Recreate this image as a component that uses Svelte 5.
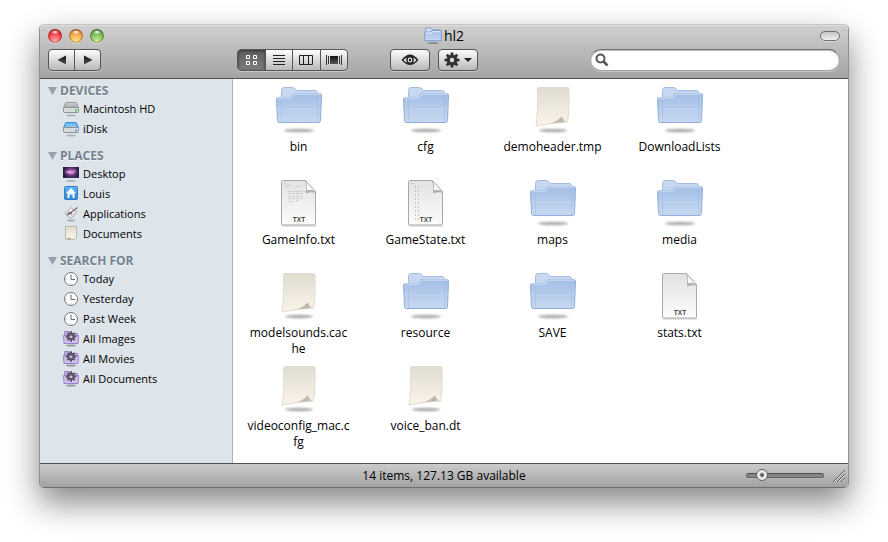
<script>
    let view = $state('icons'); // Which of the four view buttons is pressed
    let iconSize = $state(14);
    let query = $state('');

    const views = [
        { id: 'icons', label: 'Icon view' },
        { id: 'list', label: 'List view' },
        { id: 'columns', label: 'Column view' },
        { id: 'flow', label: 'Cover Flow view' }
    ];

    const sections = [
        {
            title: 'DEVICES',
            items: [
                { name: 'Macintosh HD', icon: 'disk' },
                { name: 'iDisk', icon: 'idisk' }
            ]
        },
        {
            title: 'PLACES',
            items: [
                { name: 'Desktop', icon: 'desktop' },
                { name: 'Louis', icon: 'home' },
                { name: 'Applications', icon: 'apps' },
                { name: 'Documents', icon: 'docs' }
            ]
        },
        {
            title: 'SEARCH FOR',
            items: [
                { name: 'Today', icon: 'clock' },
                { name: 'Yesterday', icon: 'clock' },
                { name: 'Past Week', icon: 'clock' },
                { name: 'All Images', icon: 'smart' },
                { name: 'All Movies', icon: 'smart' },
                { name: 'All Documents', icon: 'smart' }
            ]
        }
    ];

    const files = [
        { name: 'bin', kind: 'folder' },
        { name: 'cfg', kind: 'folder' },
        { name: 'demoheader.tmp', kind: 'page' },
        { name: 'DownloadLists', kind: 'folder' },
        { name: 'GameInfo.txt', kind: 'text', preview: 'info' },
        { name: 'GameState.txt', kind: 'text', preview: 'state' },
        { name: 'maps', kind: 'folder' },
        { name: 'media', kind: 'folder' },
        { name: 'modelsounds.cache', kind: 'page' },
        { name: 'resource', kind: 'folder' },
        { name: 'SAVE', kind: 'folder' },
        { name: 'stats.txt', kind: 'text' },
        { name: 'videoconfig_mac.cfg', kind: 'page' },
        { name: 'voice_ban.dt', kind: 'page' }
    ];

    const teeth = [0, 45, 90, 135, 180, 225, 270, 315];
</script>

{#snippet gear(color)}
    <g fill={color}>
        {#each teeth as angle}
            <path d="M-1.7 -4 L-1.3 -7.5 H1.3 L1.7 -4Z" transform="rotate({angle})" />
        {/each}
    </g>
    <circle r="3.7" fill="none" stroke={color} stroke-width="3" />
{/snippet}

{#snippet folder()}
    <ellipse cx="25" cy="45.5" rx="15" ry="1.8" fill="#777" opacity=".6" filter="url(#soft)" />
    <path d="M7.5 34V5.5Q7.5 2.5 10 2.5H18.5Q20 2.5 21 4L22.5 5.5H41Q43.5 5.5 43.5 8V34Z" fill="url(#folder-back)" stroke="#a3bce3" />
    <path d="M2.5 14.5Q2.5 12.5 4.5 12.5H15.5Q17.5 12.5 18.5 11L19.5 9.5Q20.5 8.5 22 8.5H46Q47.5 8.5 47.5 10.5L46.5 35.5Q46.5 37.5 44.5 37.5H5.5Q3.5 37.5 3.5 35.5Z" fill="url(#folder-front)" stroke="#8eaedd" />
    <path d="M3.5 13H16Q18 13 19.5 11Q20.500 9 22.500 9H46.500" fill="none" stroke="#e4ecf9" opacity=".9" />
    <path d="M3 24H47" stroke="#c7d8f2" opacity=".7" />
    <path d="M7.5 15V37M43.5 10V37" stroke="#8facd9" opacity=".3" />
{/snippet}

{#snippet sheet()}
    <ellipse cx="25" cy="45.5" rx="14" ry="1.8" fill="#777" opacity=".6" filter="url(#soft)" />
    <path d="M9.5 4Q9.5 2.5 11 2.5H39.5Q41 2.5 41 4Q41.5 28 39.5 37Q27 37.5 8 41Q10 30 9.5 4Z" fill="url(#sheet)" stroke="#e2ddd0" />
    <path d="M8.5 41Q27 39 34 31.5Q35.5 35.5 39.5 37Q26 37.5 8.5 41Z" fill="url(#curl)" />
{/snippet}

{#snippet smallIcon(icon)}
    <svg class="small-icon" viewBox="0 0 18 18" aria-hidden="true">
        {#if icon === 'disk' || icon === 'idisk'}
            <ellipse cx="9" cy="15.5" rx="5" ry="1" fill="#8d98a3" opacity=".6" />
            <path d="M3.5 3Q4 2.5 5 2.5H13Q14 2.5 14.5 3L16.5 8H1.5Z" fill={icon === 'disk' ? 'url(#metal)' : '#69b3ef'} stroke={icon === 'disk' ? '#999' : '#3d90d8'} />
            {#if icon === 'idisk'}
                <path d="M5 5H13M4 7H14" stroke="#b9e0ff" stroke-dasharray="2 1" />
            {/if}
            <rect x="1.5" y="7.500" width="15" height="5" rx="1" fill="#d8dadc" stroke="#8f9397" />
            <path d="M13 10.5H15" stroke={icon === 'disk' ? '#35cf4a' : '#51a5e8'} stroke-width="2" />
        {:else if icon === 'desktop'}
            <ellipse cx="9" cy="16" rx="5" ry="1" fill="#8d98a3" opacity=".6" />
            <rect x="1" y="1" width="16" height="12" fill="url(#aurora)" />
            <path d="M1 1.5H17" stroke="#e5e5ec" />
            <path d="M3 7L8 5L10 7L14 4L12 8L8 9Z" fill="#f0a8df" opacity=".7" />
            <path d="M1 12.5H17" stroke="#35305d" />
        {:else if icon === 'home'}
            <rect x="2.5" y="1.5" width="13" height="13" rx="1" fill="url(#blue)" stroke="#2e7fca" />
            <path d="M9 3L14 8H12.5V13H10.5V9.5H7.5V13H5.5V8H4Z" fill="#f2f9ff" />
        {:else if icon === 'apps'}
            <ellipse cx="9" cy="15.5" rx="4" ry="1" fill="#8d98a3" opacity=".7" />
            <path d="M3 8.5L9 2.5L15 7.5L8.5 13.5Z" fill="#f0f0f0" stroke="#a5a7aa" />
            <path d="M5.5 8.5L8 6M7 10L10 7M9 11L12 8" stroke="#c1c1c4" />
            <path d="M5 10L9 7.5L15.5 2.5" fill="none" stroke="#777" stroke-width="1.5" />
            <path d="M6 8L10 8.5" stroke="#8b5a6c" stroke-width="1.5" />
        {:else if icon === 'docs'}
            <path d="M3.5 1.5H14.5V12.5L12 14.5L3.5 14Z" fill="url(#sheet)" stroke="#bdb7a8" />
            <path d="M4 14L8 12.5L9 15Z" fill="#a9a69e" />
        {:else if icon === 'clock'}
            <circle cx="9" cy="9" r="6.5" fill="#fff" stroke="#777" />
            <path d="M9 4.5V9.5H13" fill="none" stroke="#666" />
            <path d="M9 13.5V15M3 9H4.5" stroke="#bbb" />
        {:else}
            <ellipse cx="9" cy="15.5" rx="5" ry="1" fill="#777" opacity=".7" />
            <path d="M2.5 7V1.5H7L8 3.5H15.5V7" fill="#c8b8e8" stroke="#9a80cf" />
            <path d="M1.5 5.5H16.5L16 13.5H2Z" fill="#cfc1ec" stroke="#9a80cf" />
            <g transform="translate(9 6.5) scale(.7)">{@render gear('#5d5568')}</g>
        {/if}
    </svg>
{/snippet}

<svg class="defs" width="0" height="0" aria-hidden="true">
    <defs>
        <filter id="soft" x="-20%" y="-150%" width="140%" height="400%"><feGaussianBlur stdDeviation="0.9" /></filter>
        <linearGradient id="folder-back" x2="0" y2="1"><stop stop-color="#cbdaf1" /><stop offset="1" stop-color="#b3c9eb" /></linearGradient>
        <linearGradient id="folder-front" x2="0" y2="1"><stop stop-color="#a3bee7" /><stop offset="1" stop-color="#c8d8f0" /></linearGradient>
        <linearGradient id="sheet" x2="0" y2="1"><stop stop-color="#e0dccf" /><stop offset="1" stop-color="#faf5e8" /></linearGradient>
        <linearGradient id="curl"><stop stop-color="#f1ece0" /><stop offset=".8" stop-color="#bab5a8" /><stop offset="1" stop-color="#e9e4d8" /></linearGradient>
        <linearGradient id="paper" x2="0" y2="1"><stop stop-color="#e2e2e2" /><stop offset="1" stop-color="#fcfcfc" /></linearGradient>
        <linearGradient id="fold" x1="0" y1="1" x2="1" y2="0"><stop offset=".3" stop-color="#fff" /><stop offset="1" stop-color="#bbb" /></linearGradient>
        <linearGradient id="metal" x2="0" y2="1"><stop stop-color="#d5d5d5" /><stop offset="1" stop-color="#a4a4a4" /></linearGradient>
        <linearGradient id="blue" x2="0" y2="1"><stop stop-color="#67b5f2" /><stop offset="1" stop-color="#2f86d6" /></linearGradient>
        <linearGradient id="glyph" x2="0" y2="1"><stop stop-color="#111" /><stop offset="1" stop-color="#555" /></linearGradient>
        <radialGradient id="aurora"><stop stop-color="#d987c8" /><stop offset=".6" stop-color="#693a80" /><stop offset="1" stop-color="#241c3c" /></radialGradient>
    </defs>
</svg>

<div class="desk">
    <div class="window">
        <header>
            <div class="titlebar">
                <div class="lights">
                    <button class="light red" aria-label="Close"></button>
                    <button class="light amber" aria-label="Minimize"></button>
                    <button class="light green" aria-label="Zoom"></button>
                </div>
                <h1>
                    <svg width="18" height="18" viewBox="0 0 50 50" aria-hidden="true">
                        <ellipse cx="25" cy="45" rx="15" ry="2.5" fill="#777" opacity=".8" />
                        <path d="M5 30V3H20L24 8H44V30Z" fill="#d5e2f5" stroke="#7fa0d6" stroke-width="2.5" />
                        <path d="M2 14H17L21 10H48V38H2Z" fill="url(#folder-front)" stroke="#7498d2" stroke-width="2.5" />
                        <path d="M4 17H19L23 13H46" fill="none" stroke="#e6effc" stroke-width="3" />
                    </svg>
                    hl2
                </h1>
                <button class="pill" aria-label="Toggle toolbar"></button>
            </div>

            <div class="toolbar">
                <div class="group nav">
                    <button aria-label="Back"><svg width="10" height="10" viewBox="0 0 10 10"><path d="M9 0.5V9.5L0.5 5Z" fill="url(#glyph)" /></svg></button>
                    <button aria-label="Forward"><svg width="10" height="10" viewBox="0 0 10 10"><path d="M1 0.5V9.5L9.5 5Z" fill="url(#glyph)" /></svg></button>
                </div>

                <div class="group views">
                    {#each views as v}
                        <button class:pressed={view === v.id} aria-label={v.label} aria-pressed={view === v.id} onclick={() => (view = v.id)}>
                            <svg width="16" height="12" viewBox="0 0 16 12">
                                {#if v.id === 'icons'}
                                    <path d="M3.500 1.500H6.500V4.500H3.500ZM10.500 1.500H13.500V4.500H10.500ZM3.500 7.500H6.500V10.500H3.500ZM10.500 7.500H13.500V10.500H10.500Z" fill="none" stroke={view === 'icons' ? '#fff' : '#222'} />
                                {:else if v.id === 'list'}
                                    <path d="M2 1.5H14M2 4.5H14M2 7.5H14M2 10.5H14" stroke="#222" />
                                {:else if v.id === 'columns'}
                                    <path d="M1.5 1.5H14.5V10.5H1.5ZM5.5 1V11M10.5 1V11" fill="none" stroke="#222" />
                                {:else}
                                    <rect x="4" y="2" width="8" height="8" fill="url(#glyph)" />
                                    <path d="M0.5 1V11M2.5 2V10M13.5 2V10M15.5 1V11" stroke="#333" />
                                {/if}
                            </svg>
                        </button>
                    {/each}
                </div>

                <div class="actions">
                    <button class="single" aria-label="Quick Look">
                        <svg width="18" height="12" viewBox="0 0 18 12">
                            <path d="M0.5 6Q9 -5 17.5 6Q9 16 0.5 6Z" fill="#262626" />
                            <path d="M2.500 6Q4 4 5.500 3.500Q4.500 6 6 8.500Q4 8 2.500 6ZM15.500 6Q14 4 12.500 3.500Q13.500 6 12 8.500Q14 8 15.500 6Z" fill="#ddd" />
                            <circle cx="9" cy="6" r="1.800" fill="#222" stroke="#e4e4e4" stroke-width="1.200" />
                        </svg>
                    </button>
                    <button class="single" aria-label="Action">
                        <svg width="28" height="16" viewBox="0 0 28 16">
                            <g transform="translate(8 8)">{@render gear('#333')}</g>
                            <path d="M20 6H28L24 10Z" fill="#222" />
                        </svg>
                    </button>
                </div>

                <label class="search">
                    <svg width="14" height="14" viewBox="0 0 14 14" aria-hidden="true">
                        <circle cx="5.5" cy="5.5" r="4" fill="none" stroke="#555" stroke-width="2" />
                        <path d="M8.5 8.5L12.5 12.5" stroke="#555" stroke-width="2.5" />
                    </svg>
                    <input type="search" aria-label="Search" bind:value={query} />
                </label>
            </div>
        </header>

        <div class="body">
            <nav class="sidebar">
                {#each sections as section}
                    <section>
                        <h2>
                            <svg width="9" height="8" viewBox="0 0 9 8" aria-hidden="true"><path d="M0 0H9L4.5 8Z" fill="#98a3ae" /></svg>
                            {section.title}
                        </h2>
                        <ul>
                            {#each section.items as item}
                                <li>
                                    <a href="#{item.icon}">
                                        {@render smallIcon(item.icon)}
                                        {item.name}
                                    </a>
                                </li>
                            {/each}
                        </ul>
                    </section>
                {/each}
            </nav>

            <main>
                {#each files as file}
                    <button class="file">
                        <svg width="49" height="50" viewBox="0 0 49 50" aria-hidden="true">
                            {#if file.kind === 'folder'}
                                {@render folder()}
                            {:else if file.kind === 'page'}
                                {@render sheet()}
                            {:else}
                                <path d="M7.5 48H42" stroke="#999" opacity=".5" />
                                <path d="M7.5 3.5Q7.5 2.5 8.5 2.5H31.5L41.5 13.5V46Q41.5 47 40.5 47H8.5Q7.5 47 7.5 46Z" fill="url(#paper)" stroke="#a9a9a9" />
                                <path d="M31.5 3Q33 9 32 15.5Q37 13.5 41.5 14.5Z" fill="#777" opacity=".5" />
                                <path d="M31.5 2.5Q33 7 32.5 12.5Q37 11.5 41.5 13.5Z" fill="url(#fold)" stroke="#aaa" stroke-width=".7" />
                                {#if file.preview === 'info'}
                                    <path d="M10 5.500H13M11 7.500H17M12 9.500H16M22 8.500H26" stroke="#ccc" stroke-dasharray="2 1" />
                                    <path d="M14 13.500H32M14 15.500H30M14 18.500H30M14 20.500H28M15 23.500H18M22 22.500H24" stroke="#ccc" stroke-dasharray="3 1" />
                                {:else if file.preview === 'state'}
                                    <path d="M10 5.500H13" stroke="#ccc" />
                                    <path d="M14.500 8V42M17.500 8V42" stroke="#c4c4c4" stroke-dasharray="2 2" />
                                {/if}
                                <text x="25" y="44" text-anchor="middle" class="badge">TXT</text>
                            {/if}
                        </svg>
                        <span>{file.name}</span>
                    </button>
                {/each}
            </main>
        </div>

        <footer>
            <p>14 items, 127.13 GB available</p>
            <div class="size">
                <input type="range" min="0" max="100" aria-label="Icon size" bind:value={iconSize} />
                <svg width="12" height="12" viewBox="0 0 12 12" aria-hidden="true">
                    <path d="M1 12L12 1M5 12L12 5M9 12L12 9" stroke="#ddd" />
                    <path d="M0 12L12 0M4 12L12 4M8 12L12 8" stroke="#555" />
                </svg>
            </div>
        </footer>
    </div>
</div>

<style>
    :global(body) {
        background: #fff;
    }

    .defs {
        position: absolute;
    }

    .desk {
        box-sizing: border-box;
        display: flex;
        flex-direction: column;
        min-height: 100vh;
        padding: 24px 39px 54px;
    }

    .window {
        display: flex;
        flex: 1;
        flex-direction: column;
        border: 1px solid #8f8f8f;
        border-top-color: #c4c4c4;
        border-bottom-color: #6f6f6f;
        border-radius: 5px;
        background: #fff;
        box-shadow: 0 15px 32px rgba(0, 0, 0, 0.48);
        font-family: 'Lucida Grande', 'Open Sans', 'Noto Sans', sans-serif;
        font-size: 12px;
        color: #000;
        overflow: hidden;
    }

    button {
        padding: 0;
        border: 0;
        background: none;
        font: inherit;
        color: inherit;
    }

    svg {
        display: block;
        flex: none;
    }

    header {
        background: linear-gradient(#d0d0d0, #a4a4a4);
        border-bottom: 1px solid #515151;
        box-shadow: inset 0 1px #e0e0e0;
    }

    .titlebar {
        display: grid;
        grid-template-columns: 1fr auto 1fr;
        align-items: center;
        height: 22px;
        padding: 0 8px;
    }

    .lights {
        display: flex;
        gap: 7px;
    }

    .light {
        width: 14px;
        height: 14px;
        border-radius: 50%;
        box-shadow: inset 0 0 1px 1px rgba(60, 0, 0, 0.35), 0 1px rgba(255, 255, 255, 0.5);
    }

    .red {
        background: radial-gradient(ellipse 4px 2px at 50% 22%, #fff, transparent), radial-gradient(circle at 50% 90%, #ffb5b5, #ee3a40 60%, #a81c20);
    }

    .amber {
        background: radial-gradient(ellipse 4px 2px at 50% 22%, #fff, transparent), radial-gradient(circle at 50% 90%, #ffe98c, #f0a044 60%, #a85a1c);
    }

    .green {
        background: radial-gradient(ellipse 4px 2px at 50% 22%, #fff, transparent), radial-gradient(circle at 50% 90%, #d3f3a0, #74b855 60%, #38702c);
    }

    h1 {
        display: flex;
        align-items: center;
        gap: 2px;
        margin: 0;
        font-size: 14px;
        font-weight: 400;
        line-height: 22px;
    }

    .pill {
        justify-self: end;
        width: 20px;
        height: 10px;
        border: 1px solid #707070;
        border-radius: 5px;
        background: linear-gradient(#c4c4c4, #efefef);
        box-shadow: 0 1px #ddd;
    }

    .toolbar {
        display: flex;
        align-items: center;
        padding: 2px 8px 7px;
    }

    .group,
    .single {
        box-sizing: border-box;
        height: 22px;
        border: 1px solid #565656;
        border-radius: 4px;
        background: linear-gradient(#fdfdfd, #b9b9b9);
        box-shadow: 0 1px rgba(255, 255, 255, 0.35);
    }

    .group {
        display: flex;
        overflow: hidden;
    }

    .group button,
    .single {
        display: flex;
        align-items: center;
        justify-content: center;
    }

    .group button {
        flex: 1;
    }

    .group button + button {
        border-left: 1px solid #565656;
    }

    .group .pressed {
        background: linear-gradient(#5c5c5c, #7e7e7e);
        box-shadow: inset 0 1px 3px #333;
    }

    .nav {
        width: 53px;
    }

    .views {
        width: 111px;
        margin-left: 136px;
    }

    .actions {
        display: flex;
        gap: 8px;
        margin-left: 42px;
    }

    .single {
        width: 40px;
    }

    .search {
        display: flex;
        align-items: center;
        gap: 4px;
        box-sizing: border-box;
        width: 250px;
        height: 22px;
        margin-left: auto;
        padding: 0 8px 0 4px;
        border: 1px solid #a2a2a2;
        border-top-color: #707070;
        border-radius: 11px;
        background: #fff;
        box-shadow: inset 0 1px 1px #bbb, 0 1px #c5c5c5;
    }

    .search input {
        flex: 1;
        min-width: 0;
        border: 0;
        outline: 0;
        background: none;
        font: inherit;
    }

    .body {
        display: flex;
        flex: 1;
    }

    .sidebar {
        box-sizing: border-box;
        width: 193px;
        padding-top: 4px;
        border-right: 1px solid #b2b2b2;
        background: #dde4ea;
        font-size: 11px;
    }

    section {
        margin-bottom: 9px;
    }

    h2 {
        display: flex;
        align-items: center;
        gap: 3px;
        margin: 0;
        padding-left: 8px;
        font-size: 12px;
        font-weight: 700;
        line-height: 16px;
        color: #74828f;
        text-shadow: 0 1px #f2f5f8;
    }

    ul {
        margin: 0;
        padding: 0;
        list-style: none;
    }

    .sidebar a {
        display: flex;
        align-items: center;
        gap: 3px;
        padding-left: 22px;
        line-height: 20px;
        color: #000;
        text-decoration: none;
    }

    .small-icon {
        width: 18px;
        height: 18px;
    }

    main {
        flex: 1;
        display: grid;
        grid-template-columns: repeat(auto-fill, 127px);
        grid-auto-rows: 93px;
        align-content: start;
        padding: 6px 0 0 2px;
    }

    .file {
        display: flex;
        flex-direction: column;
        align-items: center;
        gap: 4px;
    }

    .file span {
        max-width: 103px;
        line-height: 16px;
        text-align: center;
        word-break: break-all;
    }

    .badge {
        font-size: 7px;
        font-weight: 600;
        fill: #333;
    }

    footer {
        display: grid;
        grid-template-columns: 1fr auto 1fr;
        align-items: center;
        height: 23px;
        border-top: 1px solid #515151;
        background: linear-gradient(#cbcbcb, #a2a2a2);
    }

    footer p {
        grid-column: 2;
        margin: 0;
        line-height: 22px;
    }

    .size {
        display: flex;
        align-items: center;
        justify-content: flex-end;
        gap: 9px;
        padding-right: 3px;
    }

    .size svg {
        align-self: flex-end;
    }

    input[type='range'] {
        appearance: none;
        width: 78px;
        height: 12px;
        margin: 0;
        background: none;
    }

    input[type='range']::-webkit-slider-runnable-track {
        box-sizing: border-box;
        height: 5px;
        border: 1px solid #666;
        border-top-color: #505050;
        border-radius: 3px;
        background: #858585;
    }

    input[type='range']::-webkit-slider-thumb {
        appearance: none;
        box-sizing: border-box;
        width: 12px;
        height: 12px;
        margin-top: -5px;
        border: 1px solid #666;
        border-radius: 50%;
        background: radial-gradient(circle, #555 1px, #f5f5f5 3px, #ccc);
    }
</style>
